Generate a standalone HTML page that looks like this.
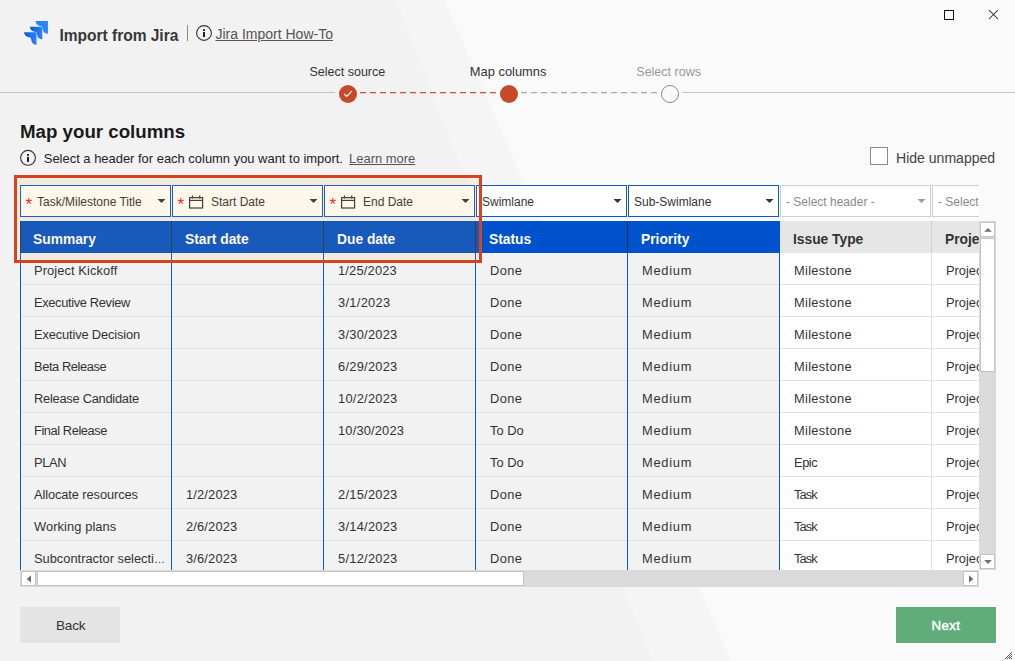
<!DOCTYPE html>
<html><head><meta charset="utf-8"><title>Import from Jira</title>
<style>
*{box-sizing:border-box}
html,body{margin:0;padding:0}
body{width:1015px;height:661px;overflow:hidden;position:relative;background:#f2f2f2;font-family:"Liberation Sans",sans-serif;color:#333}
.a{position:absolute}
.t{position:absolute;white-space:nowrap}
</style></head><body>
<svg class="a" style="left:0;top:0" width="1015" height="661"><polygon points="396.5,0 1015,0 1015,661 652,661" fill="#f5f5f5"/><polygon points="444.5,0 1015,0 1015,661 731,661" fill="#fafafa"/></svg>
<svg class="a" style="left:20px;top:17px" width="32" height="32" viewBox="0 0 32 32">
<defs><linearGradient id="jg1" x1="0" y1="0" x2="12.4" y2="0" gradientUnits="userSpaceOnUse"><stop offset="0" stop-color="#0055d4"/><stop offset="0.6" stop-color="#1f74f0"/><stop offset="1" stop-color="#2a82fc"/></linearGradient>
<linearGradient id="jg2" x1="0" y1="0" x2="12.4" y2="0" gradientUnits="userSpaceOnUse"><stop offset="0" stop-color="#2a84ff"/><stop offset="1" stop-color="#2684ff"/></linearGradient></defs>
<path transform="translate(15.5,4.1)" d="M0,0 H12.4 V12.6 C10.8,12.6 9.3,12 8.4,10.8 C7.5,9.6 7.2,8.2 7.1,7 C7,6 6.7,5.4 6,5.2 C3.4,5 0.3,3.6 0,0 Z" fill="url(#jg2)"/>
<path transform="translate(9.9,9.7)" d="M0,0 H12.4 V12.6 C10.8,12.6 9.3,12 8.4,10.8 C7.5,9.6 7.2,8.2 7.1,7 C7,6 6.7,5.4 6,5.2 C3.4,5 0.3,3.6 0,0 Z" fill="url(#jg1)"/>
<path transform="translate(4.1,15.2)" d="M0,0 H12.4 V12.6 C10.8,12.6 9.3,12 8.4,10.8 C7.5,9.6 7.2,8.2 7.1,7 C7,6 6.7,5.4 6,5.2 C3.4,5 0.3,3.6 0,0 Z" fill="url(#jg1)"/>
</svg>
<div class="t" style="left:59.50px;top:28.09px;font-size:15.6px;line-height:15.6px;font-weight:700;color:#383838;letter-spacing:-0.05px">Import from Jira</div>
<div class="a" style="left:187px;top:25px;width:1px;height:16px;background:#888"></div>
<svg class="a" style="left:195px;top:24px" width="18" height="18" viewBox="0 0 18 18">
<circle cx="9" cy="9" r="7.4" fill="none" stroke="#333" stroke-width="1.1"/>
<rect x="8" y="5.2" width="2" height="1.8" fill="#222"/><rect x="8" y="8" width="2" height="5" fill="#222"/></svg>
<div class="t" style="left:215.50px;top:26.75px;font-size:14px;line-height:14px;font-weight:400;color:#555;text-decoration:underline;text-underline-offset:1px">Jira Import How-To</div>
<div class="a" style="left:944px;top:10px;width:10px;height:10px;border:1.3px solid #111"></div>
<svg class="a" style="left:985px;top:6px" width="17" height="17" viewBox="0 0 17 17">
<path d="M4,4 L13,13 M13,4 L4,13" stroke="#222" stroke-width="1.05" fill="none"/></svg>
<svg class="a" style="left:0;top:80px" width="1015" height="30" viewBox="0 80 1015 30">
<line x1="0" y1="92.5" x2="335" y2="92.5" stroke="#c4c4c4" stroke-width="1"/>
<line x1="682" y1="92.5" x2="1015" y2="92.5" stroke="#c4c4c4" stroke-width="1"/>
<line x1="360" y1="92.5" x2="498" y2="92.5" stroke="#c9512f" stroke-width="1.25" stroke-dasharray="6 4"/>
<line x1="521" y1="92.5" x2="659" y2="92.5" stroke="#aaaaaa" stroke-width="1.25" stroke-dasharray="6 4"/>
<circle cx="348" cy="94" r="9" fill="#c64a29"/>
<path d="M344.2,94 L346.7,96.5 L351.8,91.2" stroke="#fff" stroke-width="1.15" fill="none"/>
<circle cx="509" cy="94" r="9" fill="#c64a29"/>
<circle cx="670" cy="94" r="8.5" fill="#fafafa" stroke="#8a8a8a" stroke-width="1"/>
</svg>
<div class="t" style="left:309.50px;top:65.92px;font-size:12.5px;line-height:12.5px;font-weight:400;color:#333;">Select source</div>
<div class="t" style="left:469.80px;top:65.58px;font-size:12.9px;line-height:12.9px;font-weight:400;color:#333;">Map columns</div>
<div class="t" style="left:636.30px;top:65.92px;font-size:12.5px;line-height:12.5px;font-weight:400;color:#999;">Select rows</div>
<div class="t" style="left:20.00px;top:122.77px;font-size:18.7px;line-height:18.7px;font-weight:700;color:#1a1a1a;">Map your columns</div>
<svg class="a" style="left:19px;top:148.7px" width="18" height="18" viewBox="0 0 18 18">
<circle cx="9" cy="8.8" r="7.4" fill="none" stroke="#333" stroke-width="1.1"/>
<rect x="8" y="5" width="2" height="1.8" fill="#222"/><rect x="8" y="7.9" width="2" height="5" fill="#222"/></svg>
<div class="t" style="left:43.80px;top:152.64px;font-size:12.95px;line-height:12.95px;font-weight:400;color:#222;">Select a header for each column you want to import. <span style="color:#555;text-decoration:underline;text-underline-offset:1px;margin-left:2.5px">Learn more</span></div>
<div class="a" style="left:870px;top:147px;width:18px;height:18px;border:1px solid #8a8a8a;background:#fff"></div>
<div class="t" style="left:896.00px;top:151.01px;font-size:14.05px;line-height:14.05px;font-weight:400;color:#444;">Hide unmapped</div>
<div class="a" style="left:0;top:180px;width:979px;height:390px;overflow:hidden">
<div class="a" style="left:20px;top:5px;width:151px;height:32px;border:1px solid #0d56cc;background:#fff"></div>
<div class="t" style="left:25.5px;top:15.5px;font-size:17px;line-height:17px;color:#e5202b">*</div>
<div class="t" style="left:37.00px;top:15.54px;font-size:12px;line-height:12px;font-weight:400;color:#333;">Task/Milestone Title</div>
<svg class="a" style="left:156.5px;top:18px" width="10" height="6"><path d="M0.5,0.9 L8.5,0.9 L4.5,5 Z" fill="#333"/></svg>
<div class="a" style="left:20px;top:41px;width:152px;height:32px;background:#0052cc"></div>
<div class="t" style="left:33.00px;top:53.32px;font-size:13.8px;line-height:13.8px;font-weight:700;color:#fff;">Summary</div>
<div class="a" style="left:20px;top:73px;width:152px;height:32px;background:#f2f2f2;border-bottom:1px solid #e3e3e3"></div>
<div class="t" style="left:34.00px;top:84.82px;font-size:12.85px;line-height:12.85px;font-weight:400;color:#333;letter-spacing:0.101px">Project Kickoff</div>
<div class="a" style="left:20px;top:105px;width:152px;height:32px;background:#f2f2f2;border-bottom:1px solid #e3e3e3"></div>
<div class="t" style="left:34.00px;top:116.82px;font-size:12.85px;line-height:12.85px;font-weight:400;color:#333;letter-spacing:-0.339px">Executive Review</div>
<div class="a" style="left:20px;top:137px;width:152px;height:32px;background:#f2f2f2;border-bottom:1px solid #e3e3e3"></div>
<div class="t" style="left:34.00px;top:148.82px;font-size:12.85px;line-height:12.85px;font-weight:400;color:#333;letter-spacing:-0.139px">Executive Decision</div>
<div class="a" style="left:20px;top:169px;width:152px;height:32px;background:#f2f2f2;border-bottom:1px solid #e3e3e3"></div>
<div class="t" style="left:34.00px;top:180.82px;font-size:12.85px;line-height:12.85px;font-weight:400;color:#333;letter-spacing:-0.415px">Beta Release</div>
<div class="a" style="left:20px;top:201px;width:152px;height:32px;background:#f2f2f2;border-bottom:1px solid #e3e3e3"></div>
<div class="t" style="left:34.00px;top:212.82px;font-size:12.85px;line-height:12.85px;font-weight:400;color:#333;letter-spacing:-0.257px">Release Candidate</div>
<div class="a" style="left:20px;top:233px;width:152px;height:32px;background:#f2f2f2;border-bottom:1px solid #e3e3e3"></div>
<div class="t" style="left:34.00px;top:244.82px;font-size:12.85px;line-height:12.85px;font-weight:400;color:#333;letter-spacing:-0.424px">Final Release</div>
<div class="a" style="left:20px;top:265px;width:152px;height:32px;background:#f2f2f2;border-bottom:1px solid #e3e3e3"></div>
<div class="t" style="left:34.00px;top:276.82px;font-size:12.85px;line-height:12.85px;font-weight:400;color:#333;letter-spacing:-0.359px">PLAN</div>
<div class="a" style="left:20px;top:297px;width:152px;height:32px;background:#f2f2f2;border-bottom:1px solid #e3e3e3"></div>
<div class="t" style="left:34.00px;top:308.82px;font-size:12.85px;line-height:12.85px;font-weight:400;color:#333;letter-spacing:-0.102px">Allocate resources</div>
<div class="a" style="left:20px;top:329px;width:152px;height:32px;background:#f2f2f2;border-bottom:1px solid #e3e3e3"></div>
<div class="t" style="left:34.00px;top:340.82px;font-size:12.85px;line-height:12.85px;font-weight:400;color:#333;letter-spacing:0.09px">Working plans</div>
<div class="a" style="left:20px;top:361px;width:152px;height:32px;background:#f2f2f2;border-bottom:1px solid #e3e3e3"></div>
<div class="t" style="left:34.00px;top:372.82px;font-size:12.85px;line-height:12.85px;font-weight:400;color:#333;letter-spacing:0px">Subcontractor selecti<span style="font-size:11px">…</span></div>
<div class="a" style="left:172px;top:5px;width:151px;height:32px;border:1px solid #0d56cc;background:#fff"></div>
<div class="t" style="left:177.5px;top:15.5px;font-size:17px;line-height:17px;color:#e5202b">*</div>
<svg class="a" style="left:188px;top:14px" width="16" height="16" viewBox="0 0 16 16">
<rect x="1.6" y="3.6" width="13" height="10.4" fill="none" stroke="#333" stroke-width="1.2"/>
<line x1="1.6" y1="6.4" x2="14.6" y2="6.4" stroke="#333" stroke-width="1.2"/>
<line x1="4.5" y1="1.5" x2="4.5" y2="4.5" stroke="#333" stroke-width="1.2"/>
<line x1="11.7" y1="1.5" x2="11.7" y2="4.5" stroke="#333" stroke-width="1.2"/></svg>
<div class="t" style="left:211.00px;top:15.54px;font-size:12px;line-height:12px;font-weight:400;color:#333;">Start Date</div>
<svg class="a" style="left:308.5px;top:18px" width="10" height="6"><path d="M0.5,0.9 L8.5,0.9 L4.5,5 Z" fill="#333"/></svg>
<div class="a" style="left:172px;top:41px;width:152px;height:32px;background:#0052cc"></div>
<div class="t" style="left:185.00px;top:53.32px;font-size:13.8px;line-height:13.8px;font-weight:700;color:#fff;">Start date</div>
<div class="a" style="left:172px;top:73px;width:152px;height:32px;background:#f2f2f2;border-bottom:1px solid #e3e3e3"></div>
<div class="a" style="left:172px;top:105px;width:152px;height:32px;background:#f2f2f2;border-bottom:1px solid #e3e3e3"></div>
<div class="a" style="left:172px;top:137px;width:152px;height:32px;background:#f2f2f2;border-bottom:1px solid #e3e3e3"></div>
<div class="a" style="left:172px;top:169px;width:152px;height:32px;background:#f2f2f2;border-bottom:1px solid #e3e3e3"></div>
<div class="a" style="left:172px;top:201px;width:152px;height:32px;background:#f2f2f2;border-bottom:1px solid #e3e3e3"></div>
<div class="a" style="left:172px;top:233px;width:152px;height:32px;background:#f2f2f2;border-bottom:1px solid #e3e3e3"></div>
<div class="a" style="left:172px;top:265px;width:152px;height:32px;background:#f2f2f2;border-bottom:1px solid #e3e3e3"></div>
<div class="a" style="left:172px;top:297px;width:152px;height:32px;background:#f2f2f2;border-bottom:1px solid #e3e3e3"></div>
<div class="t" style="left:186.00px;top:308.82px;font-size:12.85px;line-height:12.85px;font-weight:400;color:#333;letter-spacing:0.164px">1/2/2023</div>
<div class="a" style="left:172px;top:329px;width:152px;height:32px;background:#f2f2f2;border-bottom:1px solid #e3e3e3"></div>
<div class="t" style="left:186.00px;top:340.82px;font-size:12.85px;line-height:12.85px;font-weight:400;color:#333;letter-spacing:0.164px">2/6/2023</div>
<div class="a" style="left:172px;top:361px;width:152px;height:32px;background:#f2f2f2;border-bottom:1px solid #e3e3e3"></div>
<div class="t" style="left:186.00px;top:372.82px;font-size:12.85px;line-height:12.85px;font-weight:400;color:#333;letter-spacing:0.164px">3/6/2023</div>
<div class="a" style="left:324px;top:5px;width:151px;height:32px;border:1px solid #0d56cc;background:#fff"></div>
<div class="t" style="left:329.5px;top:15.5px;font-size:17px;line-height:17px;color:#e5202b">*</div>
<svg class="a" style="left:340px;top:14px" width="16" height="16" viewBox="0 0 16 16">
<rect x="1.6" y="3.6" width="13" height="10.4" fill="none" stroke="#333" stroke-width="1.2"/>
<line x1="1.6" y1="6.4" x2="14.6" y2="6.4" stroke="#333" stroke-width="1.2"/>
<line x1="4.5" y1="1.5" x2="4.5" y2="4.5" stroke="#333" stroke-width="1.2"/>
<line x1="11.7" y1="1.5" x2="11.7" y2="4.5" stroke="#333" stroke-width="1.2"/></svg>
<div class="t" style="left:363.00px;top:15.54px;font-size:12px;line-height:12px;font-weight:400;color:#333;">End Date</div>
<svg class="a" style="left:460.5px;top:18px" width="10" height="6"><path d="M0.5,0.9 L8.5,0.9 L4.5,5 Z" fill="#333"/></svg>
<div class="a" style="left:324px;top:41px;width:152px;height:32px;background:#0052cc"></div>
<div class="t" style="left:337.00px;top:53.32px;font-size:13.8px;line-height:13.8px;font-weight:700;color:#fff;">Due date</div>
<div class="a" style="left:324px;top:73px;width:152px;height:32px;background:#f2f2f2;border-bottom:1px solid #e3e3e3"></div>
<div class="t" style="left:338.00px;top:84.82px;font-size:12.85px;line-height:12.85px;font-weight:400;color:#333;letter-spacing:0.201px">1/25/2023</div>
<div class="a" style="left:324px;top:105px;width:152px;height:32px;background:#f2f2f2;border-bottom:1px solid #e3e3e3"></div>
<div class="t" style="left:338.00px;top:116.82px;font-size:12.85px;line-height:12.85px;font-weight:400;color:#333;letter-spacing:0.307px">3/1/2023</div>
<div class="a" style="left:324px;top:137px;width:152px;height:32px;background:#f2f2f2;border-bottom:1px solid #e3e3e3"></div>
<div class="t" style="left:338.00px;top:148.82px;font-size:12.85px;line-height:12.85px;font-weight:400;color:#333;letter-spacing:0.263px">3/30/2023</div>
<div class="a" style="left:324px;top:169px;width:152px;height:32px;background:#f2f2f2;border-bottom:1px solid #e3e3e3"></div>
<div class="t" style="left:338.00px;top:180.82px;font-size:12.85px;line-height:12.85px;font-weight:400;color:#333;letter-spacing:0.263px">6/29/2023</div>
<div class="a" style="left:324px;top:201px;width:152px;height:32px;background:#f2f2f2;border-bottom:1px solid #e3e3e3"></div>
<div class="t" style="left:338.00px;top:212.82px;font-size:12.85px;line-height:12.85px;font-weight:400;color:#333;letter-spacing:0.263px">10/2/2023</div>
<div class="a" style="left:324px;top:233px;width:152px;height:32px;background:#f2f2f2;border-bottom:1px solid #e3e3e3"></div>
<div class="t" style="left:338.00px;top:244.82px;font-size:12.85px;line-height:12.85px;font-weight:400;color:#333;letter-spacing:0.174px">10/30/2023</div>
<div class="a" style="left:324px;top:265px;width:152px;height:32px;background:#f2f2f2;border-bottom:1px solid #e3e3e3"></div>
<div class="a" style="left:324px;top:297px;width:152px;height:32px;background:#f2f2f2;border-bottom:1px solid #e3e3e3"></div>
<div class="t" style="left:338.00px;top:308.82px;font-size:12.85px;line-height:12.85px;font-weight:400;color:#333;letter-spacing:0.263px">2/15/2023</div>
<div class="a" style="left:324px;top:329px;width:152px;height:32px;background:#f2f2f2;border-bottom:1px solid #e3e3e3"></div>
<div class="t" style="left:338.00px;top:340.82px;font-size:12.85px;line-height:12.85px;font-weight:400;color:#333;letter-spacing:0.263px">3/14/2023</div>
<div class="a" style="left:324px;top:361px;width:152px;height:32px;background:#f2f2f2;border-bottom:1px solid #e3e3e3"></div>
<div class="t" style="left:338.00px;top:372.82px;font-size:12.85px;line-height:12.85px;font-weight:400;color:#333;letter-spacing:0.263px">5/12/2023</div>
<div class="a" style="left:476px;top:5px;width:151px;height:32px;border:1px solid #0d56cc;background:#fff"></div>
<div class="t" style="left:482.00px;top:15.54px;font-size:12px;line-height:12px;font-weight:400;color:#333;">Swimlane</div>
<svg class="a" style="left:612.5px;top:18px" width="10" height="6"><path d="M0.5,0.9 L8.5,0.9 L4.5,5 Z" fill="#333"/></svg>
<div class="a" style="left:476px;top:41px;width:152px;height:32px;background:#0052cc"></div>
<div class="t" style="left:489.00px;top:53.32px;font-size:13.8px;line-height:13.8px;font-weight:700;color:#fff;">Status</div>
<div class="a" style="left:476px;top:73px;width:152px;height:32px;background:#f2f2f2;border-bottom:1px solid #e3e3e3"></div>
<div class="t" style="left:490.00px;top:84.82px;font-size:12.85px;line-height:12.85px;font-weight:400;color:#333;letter-spacing:0.379px">Done</div>
<div class="a" style="left:476px;top:105px;width:152px;height:32px;background:#f2f2f2;border-bottom:1px solid #e3e3e3"></div>
<div class="t" style="left:490.00px;top:116.82px;font-size:12.85px;line-height:12.85px;font-weight:400;color:#333;letter-spacing:0.379px">Done</div>
<div class="a" style="left:476px;top:137px;width:152px;height:32px;background:#f2f2f2;border-bottom:1px solid #e3e3e3"></div>
<div class="t" style="left:490.00px;top:148.82px;font-size:12.85px;line-height:12.85px;font-weight:400;color:#333;letter-spacing:0.379px">Done</div>
<div class="a" style="left:476px;top:169px;width:152px;height:32px;background:#f2f2f2;border-bottom:1px solid #e3e3e3"></div>
<div class="t" style="left:490.00px;top:180.82px;font-size:12.85px;line-height:12.85px;font-weight:400;color:#333;letter-spacing:0.379px">Done</div>
<div class="a" style="left:476px;top:201px;width:152px;height:32px;background:#f2f2f2;border-bottom:1px solid #e3e3e3"></div>
<div class="t" style="left:490.00px;top:212.82px;font-size:12.85px;line-height:12.85px;font-weight:400;color:#333;letter-spacing:0.379px">Done</div>
<div class="a" style="left:476px;top:233px;width:152px;height:32px;background:#f2f2f2;border-bottom:1px solid #e3e3e3"></div>
<div class="t" style="left:490.00px;top:244.82px;font-size:12.85px;line-height:12.85px;font-weight:400;color:#333;letter-spacing:0.023px">To Do</div>
<div class="a" style="left:476px;top:265px;width:152px;height:32px;background:#f2f2f2;border-bottom:1px solid #e3e3e3"></div>
<div class="t" style="left:490.00px;top:276.82px;font-size:12.85px;line-height:12.85px;font-weight:400;color:#333;letter-spacing:0.023px">To Do</div>
<div class="a" style="left:476px;top:297px;width:152px;height:32px;background:#f2f2f2;border-bottom:1px solid #e3e3e3"></div>
<div class="t" style="left:490.00px;top:308.82px;font-size:12.85px;line-height:12.85px;font-weight:400;color:#333;letter-spacing:0.379px">Done</div>
<div class="a" style="left:476px;top:329px;width:152px;height:32px;background:#f2f2f2;border-bottom:1px solid #e3e3e3"></div>
<div class="t" style="left:490.00px;top:340.82px;font-size:12.85px;line-height:12.85px;font-weight:400;color:#333;letter-spacing:0.379px">Done</div>
<div class="a" style="left:476px;top:361px;width:152px;height:32px;background:#f2f2f2;border-bottom:1px solid #e3e3e3"></div>
<div class="t" style="left:490.00px;top:372.82px;font-size:12.85px;line-height:12.85px;font-weight:400;color:#333;letter-spacing:0.379px">Done</div>
<div class="a" style="left:628px;top:5px;width:151px;height:32px;border:1px solid #0d56cc;background:#fff"></div>
<div class="t" style="left:634.00px;top:15.54px;font-size:12px;line-height:12px;font-weight:400;color:#333;">Sub-Swimlane</div>
<svg class="a" style="left:764.5px;top:18px" width="10" height="6"><path d="M0.5,0.9 L8.5,0.9 L4.5,5 Z" fill="#333"/></svg>
<div class="a" style="left:628px;top:41px;width:152px;height:32px;background:#0052cc"></div>
<div class="t" style="left:641.00px;top:53.32px;font-size:13.8px;line-height:13.8px;font-weight:700;color:#fff;">Priority</div>
<div class="a" style="left:628px;top:73px;width:152px;height:32px;background:#f2f2f2;border-bottom:1px solid #e3e3e3"></div>
<div class="t" style="left:642.00px;top:84.82px;font-size:12.85px;line-height:12.85px;font-weight:400;color:#333;letter-spacing:0.744px">Medium</div>
<div class="a" style="left:628px;top:105px;width:152px;height:32px;background:#f2f2f2;border-bottom:1px solid #e3e3e3"></div>
<div class="t" style="left:642.00px;top:116.82px;font-size:12.85px;line-height:12.85px;font-weight:400;color:#333;letter-spacing:0.744px">Medium</div>
<div class="a" style="left:628px;top:137px;width:152px;height:32px;background:#f2f2f2;border-bottom:1px solid #e3e3e3"></div>
<div class="t" style="left:642.00px;top:148.82px;font-size:12.85px;line-height:12.85px;font-weight:400;color:#333;letter-spacing:0.744px">Medium</div>
<div class="a" style="left:628px;top:169px;width:152px;height:32px;background:#f2f2f2;border-bottom:1px solid #e3e3e3"></div>
<div class="t" style="left:642.00px;top:180.82px;font-size:12.85px;line-height:12.85px;font-weight:400;color:#333;letter-spacing:0.744px">Medium</div>
<div class="a" style="left:628px;top:201px;width:152px;height:32px;background:#f2f2f2;border-bottom:1px solid #e3e3e3"></div>
<div class="t" style="left:642.00px;top:212.82px;font-size:12.85px;line-height:12.85px;font-weight:400;color:#333;letter-spacing:0.744px">Medium</div>
<div class="a" style="left:628px;top:233px;width:152px;height:32px;background:#f2f2f2;border-bottom:1px solid #e3e3e3"></div>
<div class="t" style="left:642.00px;top:244.82px;font-size:12.85px;line-height:12.85px;font-weight:400;color:#333;letter-spacing:0.744px">Medium</div>
<div class="a" style="left:628px;top:265px;width:152px;height:32px;background:#f2f2f2;border-bottom:1px solid #e3e3e3"></div>
<div class="t" style="left:642.00px;top:276.82px;font-size:12.85px;line-height:12.85px;font-weight:400;color:#333;letter-spacing:0.744px">Medium</div>
<div class="a" style="left:628px;top:297px;width:152px;height:32px;background:#f2f2f2;border-bottom:1px solid #e3e3e3"></div>
<div class="t" style="left:642.00px;top:308.82px;font-size:12.85px;line-height:12.85px;font-weight:400;color:#333;letter-spacing:0.744px">Medium</div>
<div class="a" style="left:628px;top:329px;width:152px;height:32px;background:#f2f2f2;border-bottom:1px solid #e3e3e3"></div>
<div class="t" style="left:642.00px;top:340.82px;font-size:12.85px;line-height:12.85px;font-weight:400;color:#333;letter-spacing:0.744px">Medium</div>
<div class="a" style="left:628px;top:361px;width:152px;height:32px;background:#f2f2f2;border-bottom:1px solid #e3e3e3"></div>
<div class="t" style="left:642.00px;top:372.82px;font-size:12.85px;line-height:12.85px;font-weight:400;color:#333;letter-spacing:0.744px">Medium</div>
<div class="a" style="left:780px;top:5px;width:151px;height:32px;border:1px solid #cfcfcf;background:#fff"></div>
<div class="t" style="left:786.00px;top:15.54px;font-size:12px;line-height:12px;font-weight:400;color:#8a8a8a;">- Select header -</div>
<svg class="a" style="left:916.5px;top:18px" width="10" height="6"><path d="M0.5,0.9 L8.5,0.9 L4.5,5 Z" fill="#9a9a9a"/></svg>
<div class="a" style="left:780px;top:41px;width:152px;height:32px;background:#e6e6e6"></div>
<div class="t" style="left:793.00px;top:53.32px;font-size:13.8px;line-height:13.8px;font-weight:700;color:#333;">Issue Type</div>
<div class="a" style="left:780px;top:73px;width:152px;height:32px;background:#ffffff;border-bottom:1px solid #e3e3e3"></div>
<div class="t" style="left:794.00px;top:84.82px;font-size:12.85px;line-height:12.85px;font-weight:400;color:#333;letter-spacing:0.322px">Milestone</div>
<div class="a" style="left:780px;top:105px;width:152px;height:32px;background:#ffffff;border-bottom:1px solid #e3e3e3"></div>
<div class="t" style="left:794.00px;top:116.82px;font-size:12.85px;line-height:12.85px;font-weight:400;color:#333;letter-spacing:0.322px">Milestone</div>
<div class="a" style="left:780px;top:137px;width:152px;height:32px;background:#ffffff;border-bottom:1px solid #e3e3e3"></div>
<div class="t" style="left:794.00px;top:148.82px;font-size:12.85px;line-height:12.85px;font-weight:400;color:#333;letter-spacing:0.322px">Milestone</div>
<div class="a" style="left:780px;top:169px;width:152px;height:32px;background:#ffffff;border-bottom:1px solid #e3e3e3"></div>
<div class="t" style="left:794.00px;top:180.82px;font-size:12.85px;line-height:12.85px;font-weight:400;color:#333;letter-spacing:0.322px">Milestone</div>
<div class="a" style="left:780px;top:201px;width:152px;height:32px;background:#ffffff;border-bottom:1px solid #e3e3e3"></div>
<div class="t" style="left:794.00px;top:212.82px;font-size:12.85px;line-height:12.85px;font-weight:400;color:#333;letter-spacing:0.322px">Milestone</div>
<div class="a" style="left:780px;top:233px;width:152px;height:32px;background:#ffffff;border-bottom:1px solid #e3e3e3"></div>
<div class="t" style="left:794.00px;top:244.82px;font-size:12.85px;line-height:12.85px;font-weight:400;color:#333;letter-spacing:0.322px">Milestone</div>
<div class="a" style="left:780px;top:265px;width:152px;height:32px;background:#ffffff;border-bottom:1px solid #e3e3e3"></div>
<div class="t" style="left:794.00px;top:276.82px;font-size:12.85px;line-height:12.85px;font-weight:400;color:#333;letter-spacing:-0.421px">Epic</div>
<div class="a" style="left:780px;top:297px;width:152px;height:32px;background:#ffffff;border-bottom:1px solid #e3e3e3"></div>
<div class="t" style="left:794.00px;top:308.82px;font-size:12.85px;line-height:12.85px;font-weight:400;color:#333;letter-spacing:-0.9px">Task</div>
<div class="a" style="left:780px;top:329px;width:152px;height:32px;background:#ffffff;border-bottom:1px solid #e3e3e3"></div>
<div class="t" style="left:794.00px;top:340.82px;font-size:12.85px;line-height:12.85px;font-weight:400;color:#333;letter-spacing:-0.9px">Task</div>
<div class="a" style="left:780px;top:361px;width:152px;height:32px;background:#ffffff;border-bottom:1px solid #e3e3e3"></div>
<div class="t" style="left:794.00px;top:372.82px;font-size:12.85px;line-height:12.85px;font-weight:400;color:#333;letter-spacing:-0.9px">Task</div>
<div class="a" style="left:932px;top:5px;width:151px;height:32px;border:1px solid #cfcfcf;background:#fff"></div>
<div class="t" style="left:938.00px;top:15.54px;font-size:12px;line-height:12px;font-weight:400;color:#8a8a8a;">- Select header -</div>
<svg class="a" style="left:1068.5px;top:18px" width="10" height="6"><path d="M0.5,0.9 L8.5,0.9 L4.5,5 Z" fill="#9a9a9a"/></svg>
<div class="a" style="left:932px;top:41px;width:152px;height:32px;background:#e6e6e6"></div>
<div class="t" style="left:945.00px;top:53.32px;font-size:13.8px;line-height:13.8px;font-weight:700;color:#333;">Project</div>
<div class="a" style="left:932px;top:73px;width:152px;height:32px;background:#ffffff;border-bottom:1px solid #e3e3e3"></div>
<div class="t" style="left:946.00px;top:84.82px;font-size:12.85px;line-height:12.85px;font-weight:400;color:#333;letter-spacing:0px">Project</div>
<div class="a" style="left:932px;top:105px;width:152px;height:32px;background:#ffffff;border-bottom:1px solid #e3e3e3"></div>
<div class="t" style="left:946.00px;top:116.82px;font-size:12.85px;line-height:12.85px;font-weight:400;color:#333;letter-spacing:0px">Project</div>
<div class="a" style="left:932px;top:137px;width:152px;height:32px;background:#ffffff;border-bottom:1px solid #e3e3e3"></div>
<div class="t" style="left:946.00px;top:148.82px;font-size:12.85px;line-height:12.85px;font-weight:400;color:#333;letter-spacing:0px">Project</div>
<div class="a" style="left:932px;top:169px;width:152px;height:32px;background:#ffffff;border-bottom:1px solid #e3e3e3"></div>
<div class="t" style="left:946.00px;top:180.82px;font-size:12.85px;line-height:12.85px;font-weight:400;color:#333;letter-spacing:0px">Project</div>
<div class="a" style="left:932px;top:201px;width:152px;height:32px;background:#ffffff;border-bottom:1px solid #e3e3e3"></div>
<div class="t" style="left:946.00px;top:212.82px;font-size:12.85px;line-height:12.85px;font-weight:400;color:#333;letter-spacing:0px">Project</div>
<div class="a" style="left:932px;top:233px;width:152px;height:32px;background:#ffffff;border-bottom:1px solid #e3e3e3"></div>
<div class="t" style="left:946.00px;top:244.82px;font-size:12.85px;line-height:12.85px;font-weight:400;color:#333;letter-spacing:0px">Project</div>
<div class="a" style="left:932px;top:265px;width:152px;height:32px;background:#ffffff;border-bottom:1px solid #e3e3e3"></div>
<div class="t" style="left:946.00px;top:276.82px;font-size:12.85px;line-height:12.85px;font-weight:400;color:#333;letter-spacing:0px">Project</div>
<div class="a" style="left:932px;top:297px;width:152px;height:32px;background:#ffffff;border-bottom:1px solid #e3e3e3"></div>
<div class="t" style="left:946.00px;top:308.82px;font-size:12.85px;line-height:12.85px;font-weight:400;color:#333;letter-spacing:0px">Project</div>
<div class="a" style="left:932px;top:329px;width:152px;height:32px;background:#ffffff;border-bottom:1px solid #e3e3e3"></div>
<div class="t" style="left:946.00px;top:340.82px;font-size:12.85px;line-height:12.85px;font-weight:400;color:#333;letter-spacing:0px">Project</div>
<div class="a" style="left:932px;top:361px;width:152px;height:32px;background:#ffffff;border-bottom:1px solid #e3e3e3"></div>
<div class="t" style="left:946.00px;top:372.82px;font-size:12.85px;line-height:12.85px;font-weight:400;color:#333;letter-spacing:0px">Project</div>
<div class="a" style="left:171px;top:41px;width:1px;height:32px;background:#1e3553"></div>
<div class="a" style="left:171px;top:73px;width:1px;height:330px;background:#0d56cc"></div>
<div class="a" style="left:323px;top:41px;width:1px;height:32px;background:#1e3553"></div>
<div class="a" style="left:323px;top:73px;width:1px;height:330px;background:#0d56cc"></div>
<div class="a" style="left:475px;top:41px;width:1px;height:32px;background:#1e3553"></div>
<div class="a" style="left:475px;top:73px;width:1px;height:330px;background:#0d56cc"></div>
<div class="a" style="left:627px;top:41px;width:1px;height:32px;background:#1e3553"></div>
<div class="a" style="left:627px;top:73px;width:1px;height:330px;background:#0d56cc"></div>
<div class="a" style="left:779px;top:73px;width:1px;height:330px;background:#0d56cc"></div>
<div class="a" style="left:931px;top:41px;width:1px;height:32px;background:#d2d2d2"></div>
<div class="a" style="left:931px;top:73px;width:1px;height:330px;background:#e3e3e3"></div>
<div class="a" style="left:1083px;top:73px;width:1px;height:330px;background:#e3e3e3"></div>
<div class="a" style="left:20px;top:41px;width:1px;height:32px;background:#1e3553"></div>
<div class="a" style="left:20px;top:73px;width:1px;height:330px;background:#0d56cc"></div>
</div>
<div class="a" style="left:20px;top:570px;width:959px;height:17px;background:#dadada"></div>
<div class="a" style="left:21px;top:571px;width:15px;height:15px;border:1px solid #c3c3c3;background:#fff"></div>
<svg class="a" style="left:20px;top:570px" width="17" height="17"><path d="M6.8,9 L11,5.2 L11,12.8 Z" fill="#6e6e6e"/></svg>
<div class="a" style="left:37px;top:571px;width:487px;height:15px;border:1px solid #c3c3c3;background:#fff"></div>
<div class="a" style="left:963px;top:571px;width:15px;height:15px;border:1px solid #c3c3c3;background:#fff"></div>
<svg class="a" style="left:963px;top:570px" width="17" height="17"><path d="M10.2,9 L6,5.2 L6,12.8 Z" fill="#6e6e6e"/></svg>
<div class="a" style="left:979px;top:221px;width:17px;height:349px;background:#dadada"></div>
<div class="a" style="left:980px;top:222px;width:15px;height:15px;border:1px solid #c3c3c3;background:#fff"></div>
<svg class="a" style="left:979px;top:221px" width="17" height="17"><path d="M9,7.1 L5.2,10.8 L12.8,10.8 Z" fill="#6e6e6e"/></svg>
<div class="a" style="left:980px;top:238px;width:15px;height:134px;border:1px solid #c3c3c3;background:#fff"></div>
<div class="a" style="left:980px;top:554px;width:15px;height:15px;border:1px solid #c3c3c3;background:#fff"></div>
<svg class="a" style="left:979px;top:553px" width="17" height="17"><path d="M9,10.9 L5.2,7.1 L12.8,7.1 Z" fill="#6e6e6e"/></svg>
<div class="a" style="left:14px;top:175px;width:468px;height:88px;border:3px solid #d4441f;background:rgba(235,165,45,0.10)"></div>
<div class="a" style="left:20px;top:607px;width:100px;height:36px;background:#e4e4e4"></div>
<div class="t" style="left:56.00px;top:618.79px;font-size:13.6px;line-height:13.6px;font-weight:400;color:#333;letter-spacing:-0.2px">Back</div>
<div class="a" style="left:896px;top:607px;width:100px;height:36px;background:#62ac79"></div>
<div class="t" style="left:931.50px;top:618.54px;font-size:13.3px;line-height:13.3px;font-weight:400;color:#fff;-webkit-text-stroke:0.4px #fff;letter-spacing:0.4px">Next</div>
<svg class="a" style="left:1000px;top:645px" width="15" height="16"><rect x="11" y="7" width="1" height="1" fill="#5a5a5a"/><rect x="10" y="8" width="1" height="1" fill="#5a5a5a"/><rect x="9" y="9" width="1" height="1" fill="#5a5a5a"/><rect x="11" y="9" width="1" height="1" fill="#5a5a5a"/><rect x="8" y="10" width="1" height="1" fill="#5a5a5a"/><rect x="10" y="10" width="1" height="1" fill="#5a5a5a"/><rect x="7" y="11" width="1" height="1" fill="#5a5a5a"/><rect x="9" y="11" width="1" height="1" fill="#5a5a5a"/><rect x="11" y="11" width="1" height="1" fill="#5a5a5a"/><rect x="6" y="12" width="1" height="1" fill="#5a5a5a"/><rect x="8" y="12" width="1" height="1" fill="#5a5a5a"/><rect x="10" y="12" width="1" height="1" fill="#5a5a5a"/><rect x="5" y="13" width="1" height="1" fill="#5a5a5a"/><rect x="7" y="13" width="1" height="1" fill="#5a5a5a"/><rect x="9" y="13" width="1" height="1" fill="#5a5a5a"/><rect x="11" y="13" width="1" height="1" fill="#5a5a5a"/></svg>
</body></html>
